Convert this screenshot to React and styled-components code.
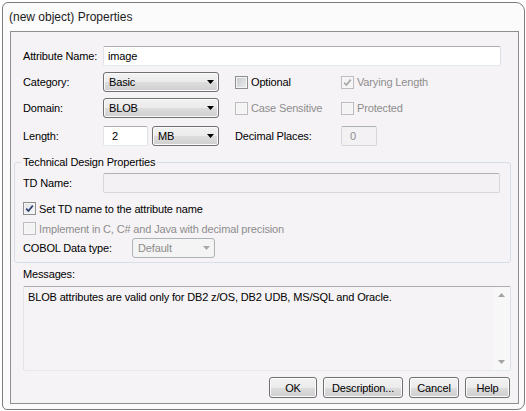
import React from "react";
import styled, { createGlobalStyle } from "styled-components";

const Global = createGlobalStyle`
  html, body { margin: 0; padding: 0; background: #ffffff; }
  body { font-family: "Liberation Sans", Arial, sans-serif; font-size: 11px; color: #000; letter-spacing: -0.15px; }
  * { box-sizing: border-box; }
`;

const Window = styled.div`
  width: 523px;
  height: 408px;
  margin: 2px 0 0 2px;
  border: 1px solid #7c7c7c;
  border-radius: 6px 9px 8px 5px;
  background: #fbfbfb;
  display: flex;
  flex-direction: column;
  overflow: hidden;
`;

const TitleBar = styled.div`
  height: 28px;
  flex: none;
  display: flex;
  align-items: center;
  padding-left: 6px;
  font-size: 12px;
  letter-spacing: 0;
  color: #1b1b24;
`;

const Panel = styled.div`
  margin-left: 7px;
  width: 509px;
  height: 373px;
  border: 1px solid #8f8f8f;
  background: #f6f3f6;
  padding: 0 8px 0 12px;
  display: flex;
  flex-direction: column;
`;

const Row = styled.div`
  display: flex;
  align-items: center;
  height: ${(p) => p.$h || 20}px;
  margin-top: ${(p) => p.$mt || 0}px;
  flex: none;
`;

const Label = styled.span`
  width: ${(p) => p.$w || 80}px;
  flex: none;
  white-space: nowrap;
  color: ${(p) => (p.$disabled ? "#8d8d8d" : "#000")};
`;

const TextInput = styled.div`
  width: ${(p) => p.$w}px;
  height: 20px;
  flex: none;
  margin-right: ${(p) => p.$mr || 0}px;
  border: 1px solid;
  border-color: ${(p) =>
    p.$disabled ? "#adb2b5 #d5d8da #d5d8da #d5d8da" : "#abadb3 #dbdfe6 #e3e9ef #e2e3ea"};
  border-radius: 2px;
  background: ${(p) => (p.$disabled ? "#f4f1f4" : "#ffffff")};
  color: ${(p) => (p.$disabled ? "#8d8d8d" : "#000")};
  display: flex;
  align-items: center;
  padding-left: ${(p) => p.$pl || 4}px;
  white-space: nowrap;
`;

const ComboBox = styled.div`
  width: ${(p) => p.$w}px;
  height: 20px;
  flex: none;
  margin-right: ${(p) => p.$mr || 0}px;
  border: 1px solid ${(p) => (p.$disabled ? "#adb2b5" : "#707070")};
  border-radius: 3px;
  background: ${(p) =>
    p.$disabled
      ? "#f4f4f4"
      : "linear-gradient(#f2f2f2 0%, #ebebeb 50%, #dddddd 51%, #cfcfcf 100%)"};
  box-shadow: ${(p) => (p.$disabled ? "none" : "inset 0 0 0 1px #fbfbfb")};
  color: ${(p) => (p.$disabled ? "#8d8d8d" : "#000")};
  display: flex;
  align-items: center;
  justify-content: space-between;
  padding: 0 4px 0 5px;
  white-space: nowrap;
`;

const Arrow = ({ color = "#000" }) => (
  <svg width="7" height="4" viewBox="0 0 7 4" style={{ flex: "none" }}>
    <path d="M0 0 H7 L3.5 4 Z" fill={color} />
  </svg>
);

const CheckField = styled.label`
  display: flex;
  align-items: center;
  width: ${(p) => (p.$w ? `${p.$w}px` : "auto")};
  flex: none;
  height: ${(p) => p.$h || 13}px;
  margin-top: ${(p) => p.$mt || 0}px;
  color: ${(p) => (p.$disabled ? "#8d8d8d" : "#000")};
  white-space: nowrap;
`;

const Box = styled.span`
  width: 13px;
  height: 13px;
  flex: none;
  margin-right: 3px;
  border: 1px solid ${(p) => (p.$disabled ? "#bdbdbd" : "#8e8f8f")};
  background: ${(p) =>
    p.$disabled
      ? "#f4f4f4"
      : p.$checked
      ? "linear-gradient(135deg, #dfe2e6 0%, #fafafa 100%)"
      : "linear-gradient(135deg, #c5c8ce 0%, #eeeef0 100%)"};
  box-shadow: inset 0 0 0 1px ${(p) => (p.$disabled ? "#f7f7f7" : "#f4f4f4")};
  display: flex;
  align-items: center;
  justify-content: center;
`;

const Check = ({ checked, disabled, label, w, mt }) => (
  <CheckField $w={w} $mt={mt} $disabled={disabled}>
    <Box $checked={checked} $disabled={disabled}>
      {checked && (
        <svg width="11" height="11" viewBox="0 0 11 11">
          <path
            d="M2.2 5.6 L4.4 8 L8.8 2.6"
            fill="none"
            stroke={disabled ? "#a8a8a8" : "#2d3f72"}
            strokeWidth="1.7"
          />
        </svg>
      )}
    </Box>
    {label}
  </CheckField>
);

const GroupBox = styled.div`
  margin: 16px 0 0 -9px;
  width: 497px;
  flex: none;
  border: 1px solid #d5dfe5;
  border-radius: 3px;
  padding: 0 9px 4px 8px;
  display: flex;
  flex-direction: column;
`;

const GroupTitle = styled.span`
  align-self: flex-start;
  height: 14px;
  line-height: 14px;
  margin: -8px 0 0 -2px;
  padding: 0 2px;
  background: #f6f3f6;
  white-space: nowrap;
`;

const Caption = styled.div`
  height: 14px;
  line-height: 14px;
  margin-top: ${(p) => p.$mt || 0}px;
  flex: none;
`;

const MessageBox = styled.div`
  margin-top: 5px;
  width: 488px;
  height: 85px;
  flex: none;
  border: 1px solid;
  border-color: #abadb3 #dbdfe6 #e3e9ef #e2e3ea;
  border-radius: 2px;
  background: #f6f3f6;
  display: flex;
`;

const MessageText = styled.div`
  flex: 1;
  padding: 4px 4px;
  line-height: 13px;
  white-space: nowrap;
`;

const ScrollBar = styled.div`
  width: 17px;
  flex: none;
  background: #f8f7f8;
  display: flex;
  flex-direction: column;
  justify-content: space-between;
  align-items: center;
  padding: 6px 0 6px;
`;

const ScrollArrow = ({ up }) => (
  <svg width="7" height="4" viewBox="0 0 7 4">
    <path d={up ? "M0 4 H7 L3.5 0 Z" : "M0 0 H7 L3.5 4 Z"} fill="#a3a3a3" />
  </svg>
);

const ButtonRow = styled.div`
  margin-top: 6px;
  display: flex;
  justify-content: flex-end;
  gap: 6px;
  flex: none;
`;

const Button = styled.div`
  width: ${(p) => p.$w}px;
  height: 21px;
  border: 1px solid #707070;
  border-radius: 3px;
  background: linear-gradient(#f2f2f2 0%, #ebebeb 50%, #dddddd 51%, #cfcfcf 100%);
  box-shadow: inset 0 0 0 1px #fcfcfc;
  display: flex;
  align-items: center;
  justify-content: center;
  white-space: nowrap;
`;

export default function App() {
  return (
    <>
      <Global />
      <Window>
        <TitleBar>(new object) Properties</TitleBar>
        <Panel>
          <Row $mt={14}>
            <Label>Attribute Name:</Label>
            <TextInput $w={398}>image</TextInput>
          </Row>
          <Row $mt={6}>
            <Label>Category:</Label>
            <ComboBox $w={116} $mr={16}>
              Basic
              <Arrow />
            </ComboBox>
            <Check w={106} label="Optional" />
            <Check checked disabled label="Varying Length" />
          </Row>
          <Row $mt={6}>
            <Label>Domain:</Label>
            <ComboBox $w={116} $mr={16}>
              BLOB
              <Arrow />
            </ComboBox>
            <Check w={106} disabled label="Case Sensitive" />
            <Check disabled label="Protected" />
          </Row>
          <Row $mt={8}>
            <Label>Length:</Label>
            <TextInput $w={45} $mr={4} $pl={8}>2</TextInput>
            <ComboBox $w={67} $mr={16}>
              MB
              <Arrow />
            </ComboBox>
            <Label $w={106}>Decimal Places:</Label>
            <TextInput $w={36} $pl={8} $disabled>0</TextInput>
          </Row>

          <GroupBox>
            <GroupTitle>Technical Design Properties</GroupTitle>
            <Row $mt={4}>
              <Label>TD Name:</Label>
              <TextInput $w={397} $disabled />
            </Row>
            <Check mt={9} checked label="Set TD name to the attribute name" />
            <Check mt={7} disabled label="Implement in C, C# and Java with decimal precision" />
            <Row $mt={3}>
              <Label $w={109}>COBOL Data type:</Label>
              <ComboBox $w={83} $disabled>
                Default
                <Arrow color="#a8a8a8" />
              </ComboBox>
            </Row>
          </GroupBox>

          <Caption $mt={4}>Messages:</Caption>
          <MessageBox>
            <MessageText>
              BLOB attributes are valid only for DB2 z/OS, DB2 UDB, MS/SQL and Oracle.
            </MessageText>
            <ScrollBar>
              <ScrollArrow up />
              <ScrollArrow />
            </ScrollBar>
          </MessageBox>

          <ButtonRow>
            <Button $w={48}>OK</Button>
            <Button $w={80}>Description...</Button>
            <Button $w={50}>Cancel</Button>
            <Button $w={45}>Help</Button>
          </ButtonRow>
        </Panel>
      </Window>
    </>
  );
}
